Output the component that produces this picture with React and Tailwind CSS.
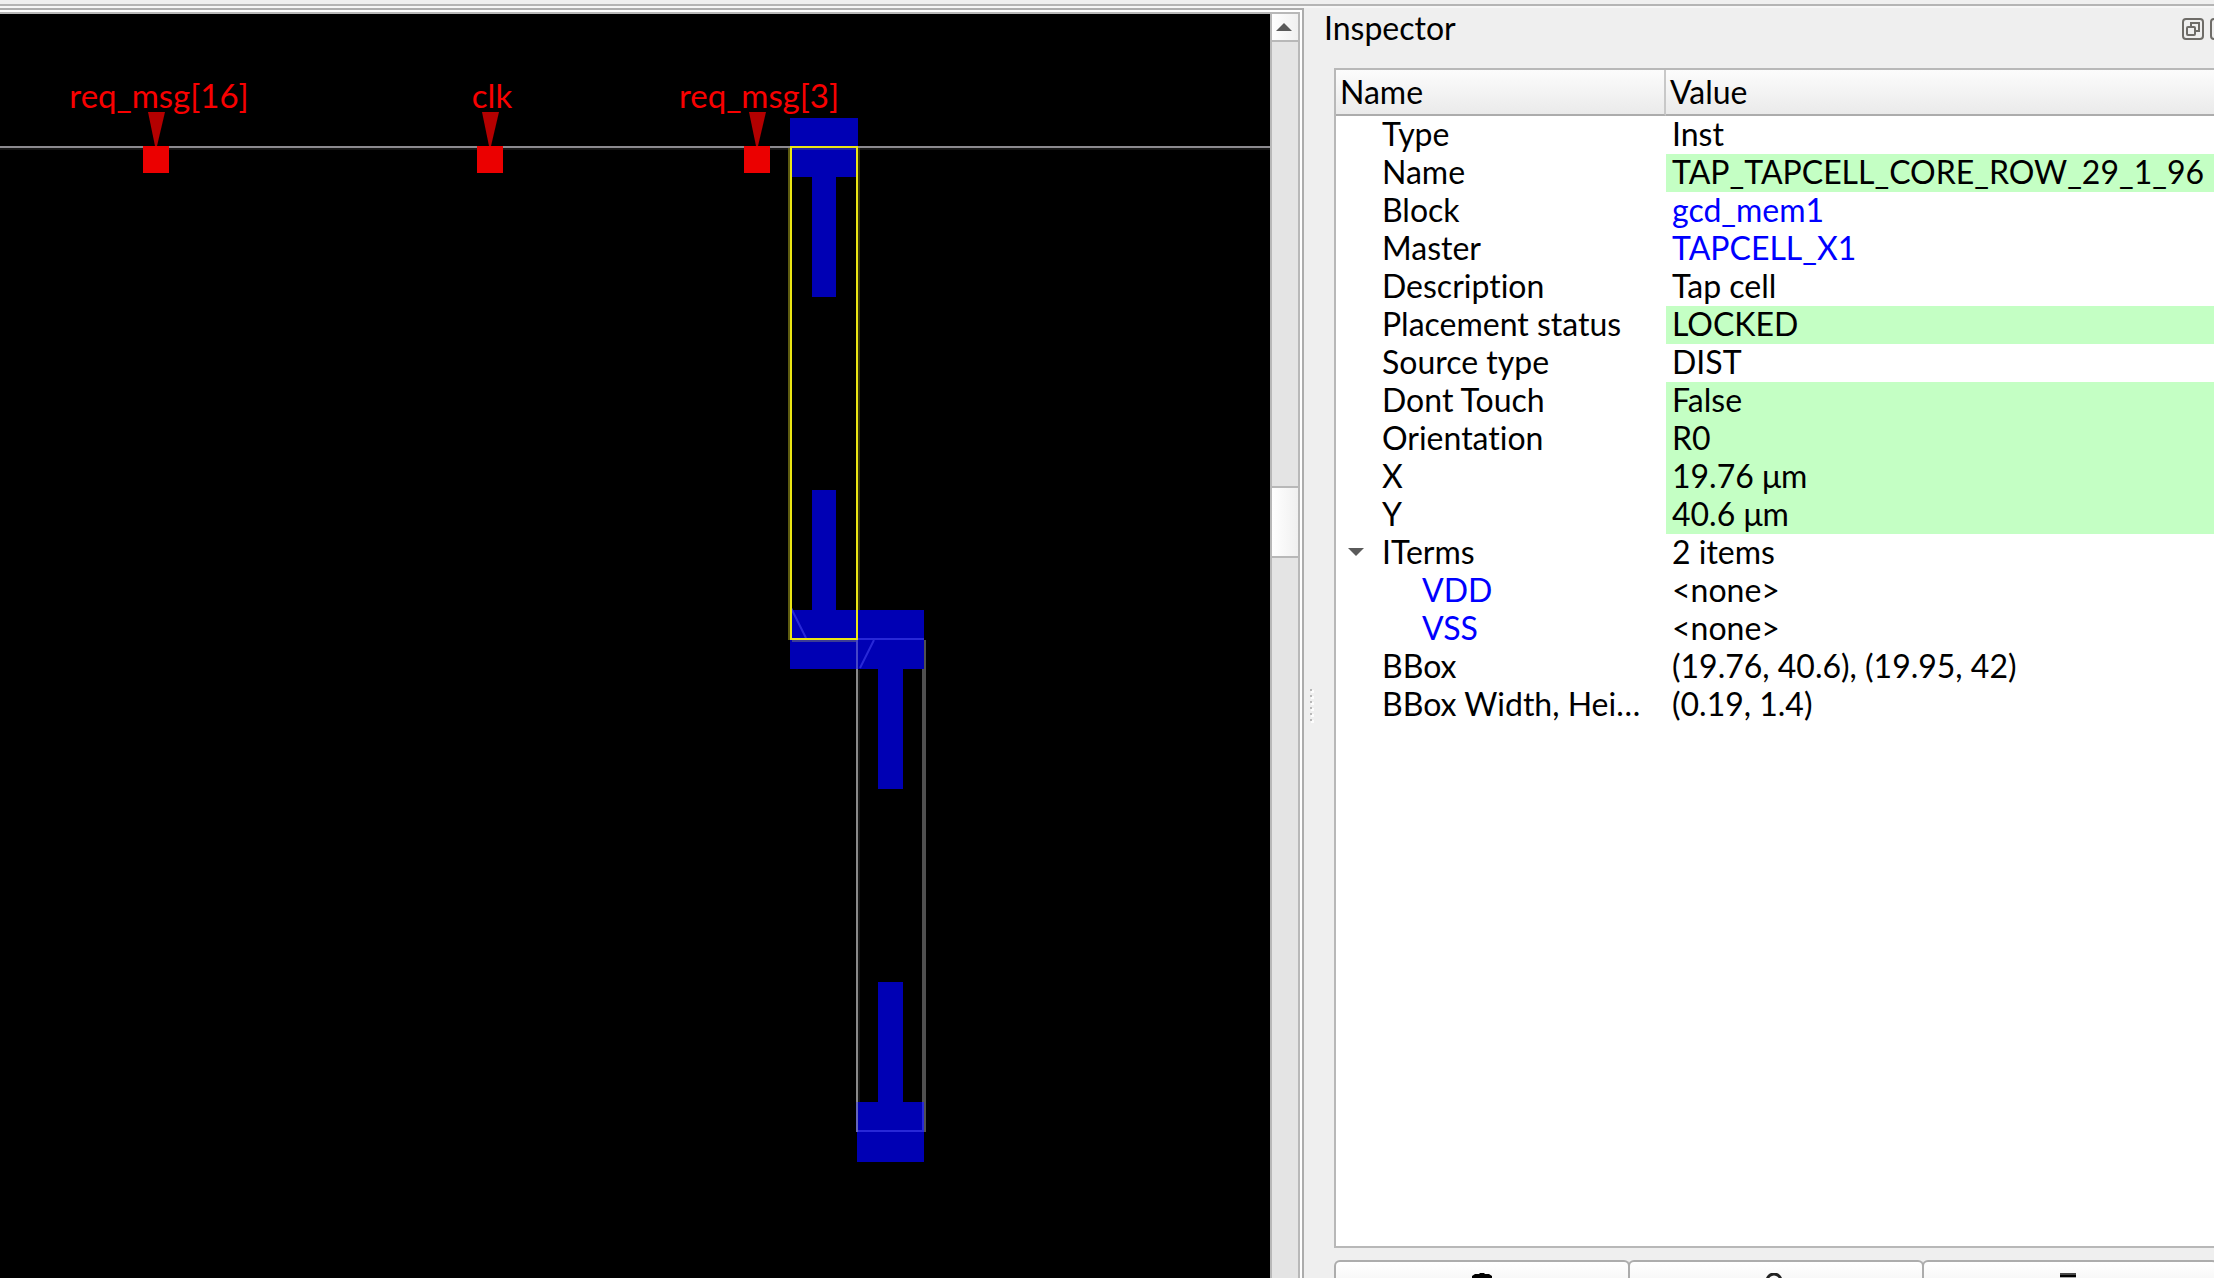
import React from "react";

const rows = [
  { name: "Type", value: "Inst" },
  { name: "Name", value: "TAP_TAPCELL_CORE_ROW_29_1_96", editable: true },
  { name: "Block", value: "gcd_mem1", link: true },
  { name: "Master", value: "TAPCELL_X1", link: true },
  { name: "Description", value: "Tap cell" },
  { name: "Placement status", value: "LOCKED", editable: true },
  { name: "Source type", value: "DIST" },
  { name: "Dont Touch", value: "False", editable: true },
  { name: "Orientation", value: "R0", editable: true },
  { name: "X", value: "19.76 μm", editable: true },
  { name: "Y", value: "40.6 μm", editable: true },
  { name: "ITerms", value: "2 items", expanded: true },
  { name: "VDD", value: "<none>", child: true },
  { name: "VSS", value: "<none>", child: true },
  { name: "BBox", value: "(19.76, 40.6), (19.95, 42)" },
  { name: "BBox Width, Hei…", value: "(0.19, 1.4)" },
];

const pins = [
  { label: "req_msg[16]", x: 156, textX: 159 },
  { label: "clk", x: 490, textX: 492 },
  { label: "req_msg[3]", x: 757, textX: 759 },
];

/* Layout drawing: pins on the die edge and two tap cells. */
function LayoutCanvas() {
  return (
    <svg className="block h-full min-w-0 flex-1 bg-black" role="img" aria-label="Layout view">
      <g transform="translate(0 -14)">
        <rect x="0" y="146" width="100%" height="2" fill="#8c8a8f" />
        <rect x="0" y="148" width="100%" height="2" fill="#161616" />
        <g fill="#0000b4">
          <rect x="790" y="118" width="68" height="59" />
          <rect x="812" y="177" width="24" height="120" />
          <rect x="812" y="490" width="24" height="120" />
          <rect x="790" y="610" width="134" height="59" />
          <rect x="878" y="669" width="25" height="120" />
          <rect x="878" y="982" width="25" height="120" />
          <rect x="857" y="1102" width="67" height="60" />
        </g>
        <g fill="#2828d7">
          <rect x="858" y="638" width="66" height="2" />
          <rect x="858" y="1130" width="64" height="2" />
          <rect x="922" y="1102" width="2" height="30" />
        </g>
        <rect x="792" y="148" width="64" height="2" fill="#2020aa" />
        <rect x="792" y="640" width="66" height="2" fill="#3c3c96" />
        <g stroke="#2828d7" strokeWidth="2">
          <path d="M791 608L806 638M860 668L874 640" />
        </g>
        <rect x="856" y="640" width="2" height="30" fill="#4646c8" />
        <rect x="856" y="669" width="2" height="433" fill="#8a8a8a" />
        <rect x="858" y="670" width="2" height="432" fill="#161616" />
        <rect x="856" y="1102" width="2" height="30" fill="#6464bc" />
        <rect x="922" y="669" width="4" height="433" fill="#505050" />
        <rect x="924" y="640" width="2" height="492" fill="#505050" />
        <rect x="788" y="148" width="2" height="492" fill="#5c5a10" />
        <rect x="858" y="148" width="2" height="462" fill="#36340a" />
        <rect x="791" y="147" width="66" height="492" fill="none" stroke="#ebe614" strokeWidth="2" />
        {pins.map((p) => (
          <g key={p.label}>
            <path d={`M${p.x - 8} 112h17L${p.x + 1} 146h-2z`} fill="#b40000" />
            <rect x={p.x - 13} y="146" width="26" height="27" fill="#eb0000" />
            <text x={p.textX} y="108" textAnchor="middle" fill="#f80000" className="text-[33px]">
              {p.label}
            </text>
          </g>
        ))}
      </g>
    </svg>
  );
}

function ScrollBar() {
  return (
    <div className="flex w-[30px] shrink-0 flex-col border-x-2 border-[#b8b8b8] bg-[#e4e4e4]">
      <button
        type="button"
        aria-label="Scroll up"
        className="flex h-7 shrink-0 items-center justify-center border-b-2 border-[#b8b8b8] bg-linear-to-r from-white to-[#f0f0f0] pr-0.5"
      >
        <svg width="16" height="8" viewBox="0 0 16 8" fill="#5a5a5a">
          <path d="M8 0L16 8H0z" />
        </svg>
      </button>
      <div className="flex-[444]" />
      <div className="h-[72px] shrink-0 border-y-2 border-[#b8b8b8] bg-linear-to-r from-white to-[#f0f0f0]" />
      <div className="flex-[720]" />
    </div>
  );
}

function Row({ row }) {
  return (
    <tr className="h-[38px]">
      <td className="p-0">
        <div className="flex h-[38px] items-center pr-2 pb-0.5 whitespace-nowrap">
          <span className="flex w-[46px] shrink-0 items-center pl-3">
            {row.expanded && (
              <button type="button" aria-label="Collapse ITerms">
                <svg width="16" height="8" viewBox="0 0 16 8" fill="#5a5a5a" className="block">
                  <path d="M0 0H16L8 8z" />
                </svg>
              </button>
            )}
          </span>
          {row.child ? (
            <a href="#" className="pl-10 text-[#0000ff]">{row.name}</a>
          ) : (
            <span>{row.name}</span>
          )}
        </div>
      </td>
      <td className={row.editable ? "bg-[#c4ffc4] p-0" : "p-0"}>
        <div className="flex h-[38px] items-center pb-0.5 pl-1.5 whitespace-nowrap">
          {row.link ? <a href="#" className="text-[#0000ff]">{row.value}</a> : row.value}
        </div>
      </td>
    </tr>
  );
}

const toolButton =
  "flex flex-1 justify-center rounded-t-md border-x-2 border-t-2 border-[#acacac] bg-linear-to-b from-white to-[#f8f8f8] pt-[11px] -mr-0.5";

export default function App() {
  return (
    <div className="flex h-screen flex-col overflow-hidden bg-[#efefef] pt-1 font-['Lato',sans-serif] text-[32px] leading-[38px] text-black [font-variant-ligatures:none]">
      <div className="h-1 shrink-0 border-t-2 border-[#b4b4b4] bg-[#f6f6f6]" />
      <div className="flex min-h-0 flex-1">
        <main className="flex min-w-0 flex-1 border-t-2 border-r-2 border-[#acacac] bg-white pt-0.5 pr-0.5">
          <div className="flex min-w-0 flex-1 border-t-2 border-[#b8b8b8]">
            <LayoutCanvas />
            <ScrollBar />
          </div>
        </main>

        <div className="flex w-5 shrink-0 flex-col justify-center pt-[128px] pl-1.5">
          <svg width="4" height="36" viewBox="0 0 4 36">
            {[0, 6, 12, 18, 24, 30].map((y) => (
              <g key={y}>
                <rect x="1" y={y + 1} width="3" height="3" fill="#fcfcfc" />
                <rect x="0" y={y} width="2" height="2" fill="#b8b8b8" />
              </g>
            ))}
          </svg>
        </div>

        <aside className="flex w-[890px] shrink-0 flex-col">
          <header className="flex h-[60px] shrink-0 items-start justify-between">
            <h1 className="pt-px">Inspector</h1>
            <div className="-mr-[18px] flex shrink-0 gap-1.5 pt-2.5">
              <button type="button" aria-label="Float panel">
                <svg width="22" height="22" viewBox="0 0 22 22" fill="none" stroke="#6e6c68" strokeWidth="2" className="block">
                  <rect x="1" y="1" width="20" height="20" rx="3" />
                  <path d="M9 8V5h8v8h-3" />
                  <rect x="5" y="9" width="8" height="8" rx="1" />
                </svg>
              </button>
              <button type="button" aria-label="Close panel">
                <svg width="22" height="22" viewBox="0 0 22 22" fill="none" stroke="#6e6c68" strokeWidth="2" className="block">
                  <rect x="1" y="1" width="20" height="20" rx="3" />
                  <path d="M7 7l8 8M15 7l-8 8" />
                </svg>
              </button>
            </div>
          </header>

          <section className="ml-2.5 min-h-0 flex-1 border-y-2 border-l-2 border-[#b8b8b8] bg-white">
            <table className="w-full table-fixed border-separate border-spacing-0 text-left">
              <colgroup>
                <col className="w-[330px]" />
                <col />
              </colgroup>
              <thead>
                <tr className="h-[46px] bg-linear-to-b from-[#fcfcfc] via-[#f3f3f3] to-[#e9e9e9]">
                  <th className="border-r-2 border-b-2 border-r-[#c8c8c8] border-b-[#acacac] p-0 pl-1 font-normal">Name</th>
                  <th className="border-b-2 border-[#acacac] p-0 pl-1 font-normal">Value</th>
                </tr>
              </thead>
              <tbody>
                {rows.map((row) => (
                  <Row key={row.name} row={row} />
                ))}
              </tbody>
            </table>
          </section>

          <div className="mt-3 -mr-0.5 ml-2.5 flex h-[18px] shrink-0 overflow-hidden">
            <button type="button" aria-label="Zoom to" className={toolButton}>
              <svg width="20" height="20" viewBox="0 0 20 20" className="shrink-0">
                <path d="M0 5V3L3 1H7L8 0H12L13 1H17L20 3V20H0z" fill="#000000" />
              </svg>
            </button>
            <button type="button" aria-label="Find" className={toolButton}>
              <svg width="20" height="20" viewBox="0 0 20 20" fill="none" stroke="#222222" strokeWidth="3" className="shrink-0">
                <circle cx="8" cy="8" r="7" />
                <path d="M12 13l7 7" />
              </svg>
            </button>
            <button type="button" aria-label="Remove" className={toolButton}>
              <svg width="20" height="20" viewBox="0 0 20 20" className="shrink-0">
                <rect width="16" height="2" fill="#484848" />
                <rect y="2" width="16" height="2" fill="#000000" />
                <rect y="4" width="16" height="2" fill="#a8a8a8" />
              </svg>
            </button>
          </div>
        </aside>
      </div>
    </div>
  );
}
